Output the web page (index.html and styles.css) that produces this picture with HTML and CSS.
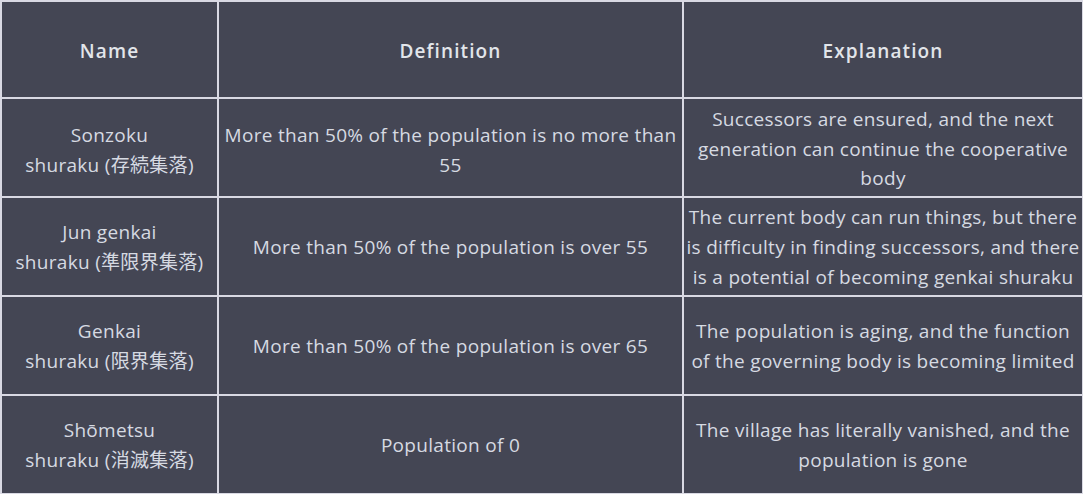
FILE: index.html
```html
<!DOCTYPE html>
<html>
<head>
<meta charset="utf-8">
<link rel="stylesheet" href="styles.css">
</head>
<body>
<table class="grid">
  <colgroup>
    <col class="c-name">
    <col class="c-def">
    <col class="c-exp">
  </colgroup>
  <thead>
    <tr class="head-row">
      <th>Name</th>
      <th>Definition</th>
      <th>Explanation</th>
    </tr>
  </thead>
  <tbody>
    <tr>
      <td class="first">Sonzoku<br>shuraku (存続集落)</td>
      <td class="first">More than 50% of the population is no more than<br>55</td>
      <td class="first low">Successors are ensured, and the next<br>generation can continue the cooperative<br>body</td>
    </tr>
    <tr>
      <td>Jun genkai<br>shuraku (準限界集落)</td>
      <td>More than 50% of the population is over 55</td>
      <td>The current body can run things, but there<br>is difficulty in finding successors, and there<br>is a potential of becoming genkai shuraku</td>
    </tr>
    <tr>
      <td>Genkai<br>shuraku (限界集落)</td>
      <td>More than 50% of the population is over 65</td>
      <td>The population is aging, and the function<br>of the governing body is becoming limited</td>
    </tr>
    <tr>
      <td>Shōmetsu<br>shuraku (消滅集落)</td>
      <td>Population of 0</td>
      <td>The village has literally vanished, and the<br>population is gone</td>
    </tr>
  </tbody>
</table>
</body>
</html>
```
FILE: styles.css
```css
html, body {
  margin: 0;
  padding: 0;
  background: #3a3b46;
}
.grid {
  border-collapse: collapse;
  table-layout: fixed;
  width: 1082px;
  background: #444654;
  color: #d6dae2;
  font-family: "Open Sans", "Noto Sans CJK JP", sans-serif;
  font-size: 19px;
  letter-spacing: 0.3px;
  line-height: 30px;
}
.c-name { width: 217px; }
.c-def { width: 465px; }
.c-exp { width: 400px; }
.grid th,
.grid td {
  border: 2px solid #d9d9e3;
  text-align: center;
  vertical-align: middle;
  padding: 0 2px;
  white-space: nowrap;
  overflow: hidden;
}
.grid th {
  height: 93px;
  padding-top: 2px;
  font-weight: 600;
  color: #e2e5ea;
  letter-spacing: 1.1px;
}
.grid td {
  height: 97px;
}
.grid td.first {
  height: 93px;
  padding-top: 4px;
}
.grid td.low {
  line-height: 29.5px;
}
```
